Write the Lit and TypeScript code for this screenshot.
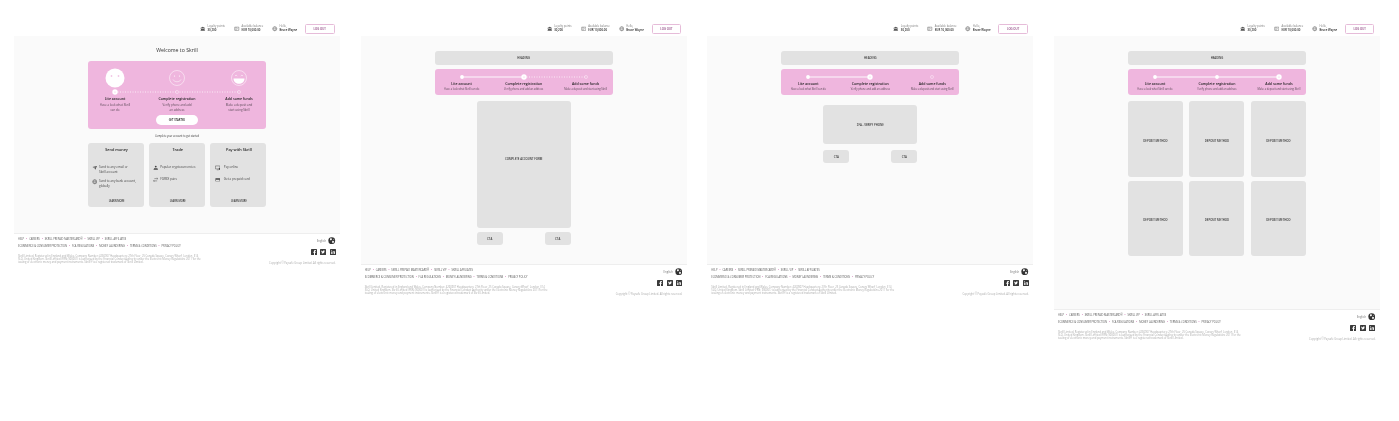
import { css, html, LitElement, svg } from 'lit';
import { customElement } from 'lit/decorators.js';
import { map } from 'lit/directives/map.js';

type StepState = 'done' | 'active' | 'todo';
type LineState = 'solid' | 'dotted' | 'none';

const STEPS = [
  { title: 'Lite account', sub: 'Have a look what Skrill can do', wide: ['Have a look what Skrill', 'can do'] },
  { title: 'Complete registration', sub: 'Verify phone and add an address', wide: ['Verify phone and add', 'an address'] },
  { title: 'Add some funds', sub: 'Make a deposit and start using Skrill', wide: ['Make a deposit and', 'start using Skrill'] },
];

const DOT_X = [27, 89, 151];

const icons = {
  bank: svg`<path d="M1 4.5 6 1.500l5 3v1H1zM2 6.500h8v3H2zM1 10h10v1H1z"/>`,
  wallet: svg`<path fill="none" stroke="currentColor" stroke-width="1" d="M1.500 2.500h9v7h-9zM4.500 2.500v7"/><circle cx="8" cy="6" r=".8"/>`,
  globe: svg`<circle cx="6" cy="6" r="4.500" fill="none" stroke="currentColor"/><path fill="none" stroke="currentColor" stroke-width=".8" d="M1.500 6h9M6 1.500c-3 3-3 6 0 9M6 1.500c3 3 3 6 0 9"/>`,
  earth: svg`<circle cx="6" cy="6" r="5.500"/><path fill="#fff" d="M3 2.500 5.500 2l1 1.500L5 5 3.500 5zM7 6l2.500.5L9 9 7.500 10 6.500 8zM9 2.800l1.200 1.500-1.500.2z"/>`,
  plane: svg`<path d="M1 4.500 11 2 7 10.500 5.600 7.200 8.800 4 4.600 6.200z"/>`,
  person: svg`<circle cx="6" cy="3.500" r="2"/><path d="M2.500 7h7l1.500 3.500h-10z"/>`,
  swap: svg`<path fill="none" stroke="currentColor" d="M1 8.500h8M3 6.500l-2 2 2 2M3 3.500h8M9 1.500l2 2-2 2"/>`,
  screen: svg`<path fill="none" stroke="currentColor" d="M1 2h9.500v6.500H1zM4 10.500h4"/><rect x="8.500" y="6.500" width="3" height="4"/>`,
  card: svg`<path d="M1 2.500h10v7H1zM2 6v2.500h8V6z" fill-rule="evenodd"/>`,
  facebook: svg`<rect width="12" height="12" rx="1"/><path fill="#fff" d="M8 12V7.500h1.400L9.700 5.700H8V4.600c0-.5.2-.8.9-.8h.8V2.200H8.400C6.900 2.200 6 3.100 6 4.400v1.300H4.500v1.800H6V12z"/>`,
  twitter: svg`<rect width="12" height="12" rx="1"/><path fill="#fff" d="M9.800 3.700c-.3.100-.6.200-.9.200.3-.2.600-.5.700-.9-.3.200-.6.300-1 .4a1.600 1.600 0 0 0-2.700 1.400A4.400 4.400 0 0 1 2.700 3.200a1.600 1.600 0 0 0 .5 2.100c-.3 0-.5-.1-.7-.2 0 .8.500 1.400 1.300 1.600-.2.100-.5.100-.7 0 .2.600.8 1.100 1.500 1.100A3.200 3.200 0 0 1 2.200 8.500 4.500 4.500 0 0 0 9 4.500c.3-.2.600-.5.800-.8z"/>`,
  linkedin: svg`<rect width="12" height="12" rx="1"/><path fill="#fff" d="M2.500 4.800h1.600V10H2.500zM3.300 2.200a.9.900 0 1 1 0 1.800.9.900 0 0 1 0-1.800zM5.200 4.800h1.500v.7c.3-.5.800-.8 1.500-.8 1.300 0 1.800.8 1.800 2.200V10H8.400V7.300c0-.7-.2-1.200-.8-1.200s-.9.500-.9 1.200V10H5.200z"/>`,
};

const faces = [
  svg`<circle cx="10" cy="10" r="9.500" fill="#fff"/><path stroke="#efb6de" stroke-width=".6" d="M5.500 8h2M6.500 7v2M12.500 8h2M13.500 7v2"/>`,
  svg`<g fill="none" stroke="#fff" stroke-width=".5"><circle cx="10" cy="10" r="7.500"/><path d="M6 11.500c1.500 3 6.500 3 8 0"/></g><circle cx="7.500" cy="8" r=".6" fill="#fff"/><circle cx="12.500" cy="8" r=".6" fill="#fff"/>`,
  svg`<circle cx="10" cy="10" r="7.500" fill="none" stroke="#fff" stroke-width=".5"/><path fill="#fff" d="M4.500 10.500h11c0 7-11 7-11 0z"/><path fill="none" stroke="#fff" stroke-width=".6" d="M6 8c.6-.8 1.600-.8 2.200 0M11.800 8c.6-.8 1.600-.8 2.200 0"/>`,
];

const FEATURES = [
  { title: 'Send money', rows: [['plane', 'Send to any email or\nSkrill account'], ['globe', 'Send to any bank account,\nglobally']] },
  { title: 'Trade', rows: [['person', 'Popular cryptocurrencies'], ['swap', 'FOREX pairs']] },
  { title: 'Pay with Skrill', rows: [['screen', 'Pay online'], ['card', 'Get a prepaid card']] },
] as const;

@customElement('app-root')
export class AppRoot extends LitElement {
  static override styles = css`
    :host {
      display: block;
      height: 421px;
      overflow: hidden;
      background: #fff;
      font-family: 'Open Sans', 'Noto Sans', sans-serif;
      color: #222;
    }
    .page {
      display: flex;
      gap: 20.67px;
      padding-left: 14px;
    }
    .frame {
      flex: 0 0 326px;
      width: 326px;
      filter: blur(0.25px);
    }
    .top {
      height: 36px;
      box-sizing: border-box;
      padding: 24px 5.5px 2px 0;
      display: grid;
      grid-template-columns: 34px 38px 33px 29.5px;
      justify-content: end;
      align-items: center;
    }
    .stat {
      display: flex;
      align-items: center;
      gap: 2px;
      font-size: 2.7px;
      line-height: 3.6px;
      color: #777;
      white-space: nowrap;
    }
    .stat svg {
      flex: none;
      width: 5.5px;
      height: 5.5px;
      fill: #555;
      color: #555;
    }
    .stat b {
      display: block;
      font-size: 2.8px;
      font-weight: 600;
      color: #222;
    }
    .logout {
      height: 10px;
      box-sizing: border-box;
      border: 0.7px solid #e6bcd9;
      border-radius: 1.5px;
      background: #fff;
      font-size: 2.8px;
      font-weight: 600;
      line-height: 8.6px;
      text-align: center;
      color: #8b3f7d;
    }
    .panel {
      background: #fafafa;
      box-sizing: border-box;
      display: flex;
      flex-direction: column;
      align-items: center;
    }
    .panel.welcome { height: 197px; }
    .panel.mid { height: 228px; padding-top: 15px; }
    .panel.long { height: 273px; padding-top: 15px; }
    .heading {
      margin: 10px 0 0;
      height: 15px;
      font-size: 5.2px;
      line-height: 9px;
      font-weight: 400;
      color: #333;
    }
    .wrap {
      width: 178px;
      display: flex;
      flex-direction: column;
    }
    .block {
      background: #e2e2e2;
      border-radius: 3px;
      display: flex;
      align-items: center;
      justify-content: center;
      font-size: 2.8px;
      font-weight: 600;
      color: #333;
    }
    .bar { height: 14px; margin-bottom: 4px; }
    .pink {
      background: #efb6de;
      border-radius: 3px;
    }
    .track {
      display: block;
      width: 178px;
      height: 8px;
    }
    .steps {
      display: grid;
      grid-template-columns: 54px 70px 54px;
      text-align: center;
    }
    .step-title {
      font-size: 3.5px;
      font-weight: 600;
      line-height: 5px;
      color: #222;
    }
    .step-sub {
      font-size: 2.9px;
      line-height: 5px;
      color: #5b4a57;
      white-space: nowrap;
    }
    .pink.small { height: 26px; padding-top: 3.5px; box-sizing: border-box; }
    .pink.small .step-sub { font-size: 2.55px; line-height: 6px; }
    .pink.large { height: 68px; padding-top: 7px; box-sizing: border-box; }
    .faces {
      display: grid;
      grid-template-columns: 54px 70px 54px;
      height: 20px;
      justify-items: center;
    }
    .faces svg { width: 20px; height: 20px; }
    .pink.large .step-title { line-height: 6px; margin-bottom: 0.5px; }
    .start {
      width: 42px;
      height: 10px;
      margin: 2.5px auto 0;
      border-radius: 5px;
      background: #fff;
      font-size: 2.6px;
      font-weight: 600;
      line-height: 10px;
      text-align: center;
      color: #222;
    }
    .caption {
      height: 14px;
      font-size: 2.55px;
      line-height: 14.5px;
      text-align: center;
      color: #333;
    }
    .cards {
      display: grid;
      grid-template-columns: repeat(3, 1fr);
      gap: 5.5px;
    }
    .card {
      height: 64px;
      background: #e2e2e2;
      border-radius: 3px;
      padding: 4px 2px 0 3.5px;
      box-sizing: border-box;
      display: flex;
      flex-direction: column;
    }
    .card h3 {
      margin: 0 0 12px;
      height: 6px;
      font-size: 3.8px;
      line-height: 6px;
      font-weight: 600;
      text-align: center;
      color: #222;
    }
    .feature {
      display: flex;
      gap: 2px;
      margin-bottom: 4px;
      font-size: 3px;
      line-height: 5px;
      color: #444;
      white-space: pre-line;
    }
    .card:not(:first-child) .feature { margin-bottom: 6.5px; }
    .card:last-child .feature { gap: 3.5px; padding-left: 1px; }
    .feature svg {
      flex: none;
      width: 5.5px;
      height: 5.5px;
      fill: #444;
      color: #444;
    }
    .more {
      margin-top: auto;
      height: 8px;
      font-size: 2.5px;
      font-weight: 600;
      line-height: 5px;
      text-align: center;
      color: #333;
    }
    .form {
      width: 94px;
      display: flex;
      flex-direction: column;
      gap: 4px;
    }
    .form.gap-sm { padding-top: 6px; }
    .form.gap-lg { padding-top: 10px; gap: 6px; }
    .form .big { height: 127px; padding-bottom: 11px; box-sizing: border-box; }
    .form.gap-lg .big { height: 39px; padding-bottom: 0; }
    .actions {
      display: flex;
      justify-content: space-between;
    }
    .actions .block { width: 26px; height: 13px; }
    .methods {
      padding-top: 6px;
      display: grid;
      grid-template-columns: repeat(3, 55px);
      justify-content: space-between;
      gap: 4px 0;
    }
    .methods .block { height: 75.5px; padding-top: 4px; box-sizing: border-box; }
    .foot {
      display: flex;
      justify-content: space-between;
      padding: 2px 4.5px 0 4px;
      border-top: 0.5px solid #eee;
      color: #666;
    }
    .links {
      display: flex;
      gap: 2px;
      font-size: 2.55px;
      line-height: 7px;
      white-space: nowrap;
      color: #555;
    }
    .links i {
      font-style: normal;
      color: #c0509f;
    }
    .legal {
      width: 186px;
      margin: 4.5px 0 0;
      font-size: 2.6px;
      line-height: 3.1px;
      color: #aaa;
    }
    .side {
      display: flex;
      flex-direction: column;
      align-items: flex-end;
    }
    .lang {
      display: flex;
      align-items: center;
      gap: 2px;
      height: 8px;
      margin-top: 0.5px;
      font-size: 2.8px;
      color: #777;
    }
    .lang svg { width: 7.5px; height: 7.5px; fill: #333; }
    .social {
      display: flex;
      gap: 3.5px;
      margin-top: 4px;
    }
    .social svg { width: 6px; height: 6px; fill: #3a3a3a; }
    .copy {
      margin-top: 6px;
      font-size: 2.6px;
      line-height: 4px;
      white-space: nowrap;
      color: #aaa;
    }
  `;

  private icon(name: keyof typeof icons) {
    return html`<svg viewBox="0 0 12 12">${icons[name]}</svg>`;
  }

  private renderTop() {
    return html`
      <div class="top">
        <div class="stat">${this.icon('bank')}<span>Loyalty points<b>30,200</b></span></div>
        <div class="stat">${this.icon('wallet')}<span>Available balance<b>EUR 10,000.00</b></span></div>
        <div class="stat">${this.icon('globe')}<span>Hello,<b>Bruce Wayne</b></span></div>
        <div class="logout">LOG OUT</div>
      </div>
    `;
  }

  private renderFoot() {
    const first = ['HELP', 'CAREERS', 'SKRILL PREPAID MASTERCARD®', 'SKRILL VIP', 'SKRILL AFFILIATES'];
    const second = ['ECOMMERCE & CONSUMER PROTECTION', 'FCA REGULATIONS', 'MONEY LAUNDERING', 'TERMS & CONDITIONS', 'PRIVACY POLICY'];
    const row = (items: string[]) => html`
      <div class="links">
        ${map(items, (t, i) => html`${i ? html`<i>•</i>` : ''}<span>${t}</span>`)}
      </div>
    `;
    return html`
      <div class="foot">
        <div>
          ${row(first)}
          ${row(second)}
          <p class="legal">
            Skrill Limited. Registered in England and Wales. Company Number: 4260907 Headquarters: 27th Floor, 25 Canada
            Square, Canary Wharf, London, E14 5LQ. United Kingdom. Skrill Limited (FRN: 900001) is authorised by the
            Financial Conduct Authority under the Electronic Money Regulations 2011 for the issuing of electronic money
            and payment instruments. Skrill® is a registered trademark of Skrill Limited.
          </p>
        </div>
        <div class="side">
          <div class="lang">English ${this.icon('earth')}</div>
          <div class="social">${this.icon('facebook')}${this.icon('twitter')}${this.icon('linkedin')}</div>
          <div class="copy">Copyright © Paysafe Group Limited. All rights reserved.</div>
        </div>
      </div>
    `;
  }

  // dots and connecting lines of the stepper
  private renderTrack(states: StepState[], lines: LineState[]) {
    return html`
      <svg class="track" viewBox="0 0 178 8">
        ${lines.map((line, i) =>
          line === 'none'
            ? ''
            : svg`<line x1=${DOT_X[i]} x2=${DOT_X[i + 1]} y1="4" y2="4" stroke="#fff"
                stroke-opacity=${line === 'solid' ? 0.9 : 0.9}
                stroke-width=${line === 'solid' ? 1 : 0.8}
                stroke-dasharray=${line === 'solid' ? 'none' : '1 1.5'} />`
        )}
        ${states.map((state, i) => {
          if (state === 'active') {
            return svg`<circle cx=${DOT_X[i]} cy="4" r="2.7" fill="#fff"/><circle cx=${DOT_X[i]} cy="4" r=".6" fill="#efb6de"/>`;
          }
          if (state === 'done') {
            return svg`<circle cx=${DOT_X[i]} cy="4" r="1.9" fill="#fff"/>`;
          }
          return svg`<circle cx=${DOT_X[i]} cy="4" r="1.5" fill="#efb6de" stroke="#fff" stroke-opacity=".8" stroke-width=".5"/>`;
        })}
      </svg>
    `;
  }

  private renderSmallSteps(states: StepState[], lines: LineState[]) {
    return html`
      <div class="pink small">
        ${this.renderTrack(states, lines)}
        <div class="steps">
          ${map(STEPS, (s) => html`
            <div>
              <div class="step-title">${s.title}</div>
              <div class="step-sub">${s.sub}</div>
            </div>
          `)}
        </div>
      </div>
    `;
  }

  private renderWelcome() {
    return html`
      <div class="panel welcome">
        <h1 class="heading">Welcome to Skrill</h1>
        <div class="wrap">
          <div class="pink large">
            <div class="faces">
              ${map(faces, (f) => html`<svg viewBox="0 0 20 20">${f}</svg>`)}
            </div>
            ${this.renderTrack(['active', 'todo', 'todo'], ['dotted', 'dotted'])}
            <div class="steps">
              ${map(STEPS, (s) => html`
                <div>
                  <div class="step-title">${s.title}</div>
                  ${map(s.wide, (l) => html`<div class="step-sub">${l}</div>`)}
                </div>
              `)}
            </div>
            <div class="start">GET STARTED</div>
          </div>
          <div class="caption">Complete your account to get started</div>
          <div class="cards">
            ${map(FEATURES, (c) => html`
              <div class="card">
                <h3>${c.title}</h3>
                ${map(c.rows, (r) => html`
                  <div class="feature">${this.icon(r[0])}<span>${r[1]}</span></div>
                `)}
                <div class="more">LEARN MORE</div>
              </div>
            `)}
          </div>
        </div>
      </div>
    `;
  }

  private renderForm(klass: string, label: string) {
    return html`
      <div class="form ${klass}">
        <div class="block big">${label}</div>
        <div class="actions">
          <div class="block">CTA</div>
          <div class="block">CTA</div>
        </div>
      </div>
    `;
  }

  override render() {
    return html`
      <div class="page">
        <section class="frame">
          ${this.renderTop()}
          ${this.renderWelcome()}
          ${this.renderFoot()}
        </section>
        <section class="frame">
          ${this.renderTop()}
          <div class="panel mid">
            <div class="wrap">
              <div class="block bar">HEADING</div>
              ${this.renderSmallSteps(['done', 'active', 'todo'], ['solid', 'dotted'])}
            </div>
            ${this.renderForm('gap-sm', 'COMPLETE ACCOUNT FORM')}
          </div>
          ${this.renderFoot()}
        </section>
        <section class="frame">
          ${this.renderTop()}
          <div class="panel mid">
            <div class="wrap">
              <div class="block bar">HEADING</div>
              ${this.renderSmallSteps(['done', 'active', 'todo'], ['solid', 'none'])}
            </div>
            ${this.renderForm('gap-lg', '2FA - VERIFY PHONE')}
          </div>
          ${this.renderFoot()}
        </section>
        <section class="frame">
          ${this.renderTop()}
          <div class="panel long">
            <div class="wrap">
              <div class="block bar">HEADING</div>
              ${this.renderSmallSteps(['done', 'done', 'active'], ['solid', 'solid'])}
              <div class="methods">
                ${map([1, 2, 3, 4, 5, 6], () => html`<div class="block">DEPOSIT METHOD</div>`)}
              </div>
            </div>
          </div>
          ${this.renderFoot()}
        </section>
      </div>
    `;
  }
}

declare global {
  interface HTMLElementTagNameMap {
    'app-root': AppRoot;
  }
}
